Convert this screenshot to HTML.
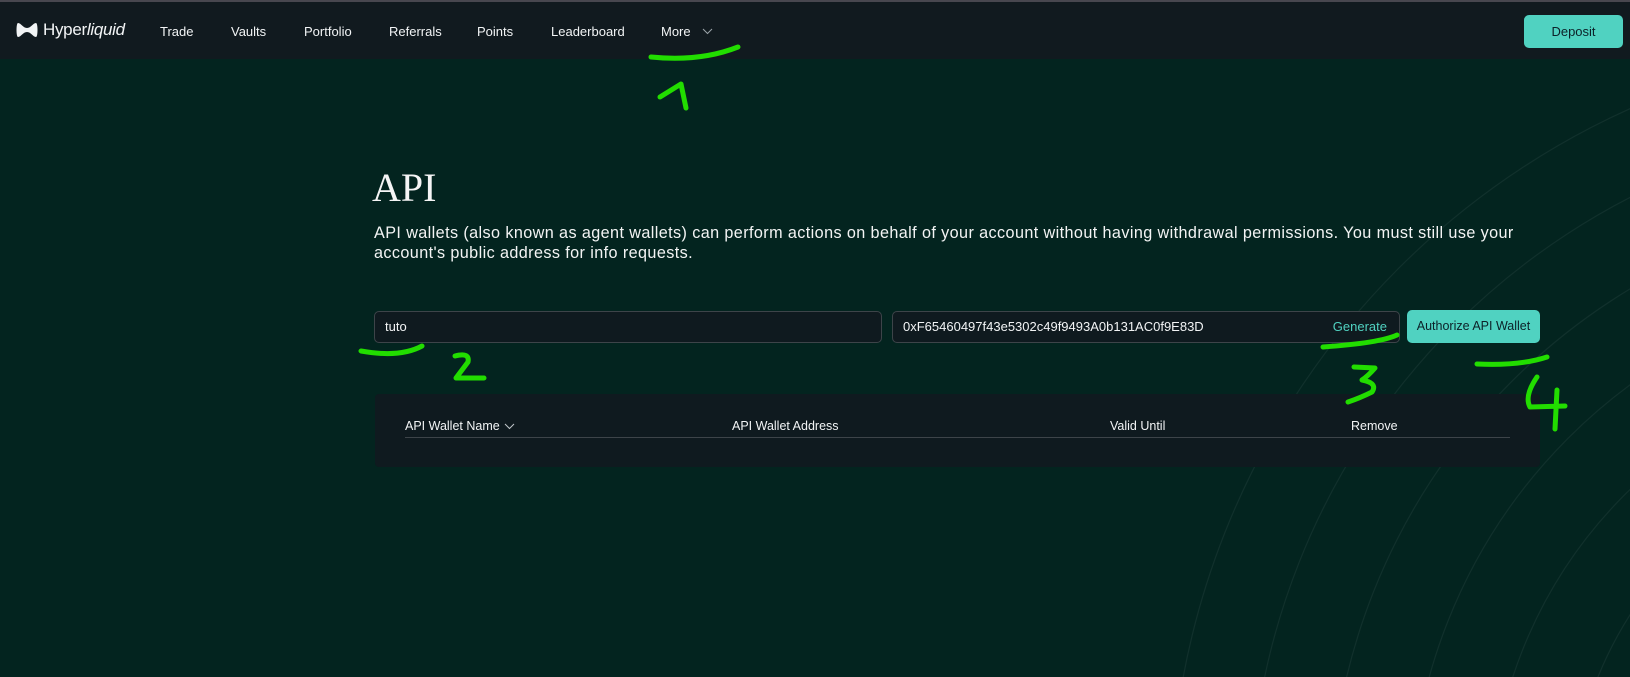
<!DOCTYPE html>
<html><head><meta charset="utf-8"><style>
*{box-sizing:border-box;margin:0;padding:0}
body{width:1630px;height:677px;overflow:hidden;background:#03241f;font-family:"Liberation Sans",sans-serif;color:#fff;position:relative}
.top{position:absolute;left:0;top:0;width:1630px;height:2px;background:#48474f}
nav{position:absolute;left:0;top:2px;width:1630px;height:57px;background:#111a1f}
nav .it{position:absolute;top:22px;font-size:13px;color:#f2f4f5}
.logo{position:absolute;left:43px;top:18px;font-size:17px;color:#f2f4f5;letter-spacing:-0.3px}
.dep{position:absolute;left:1524px;top:13px;width:99px;height:33px;background:#50d2c1;border-radius:5px;color:#0c2128;font-size:13px;text-align:center;line-height:33px}
h1{position:absolute;left:372px;top:164px;font-family:"Liberation Serif",serif;font-weight:400;font-size:40px;color:#f5f5f5}
.p{position:absolute;left:374px;top:223px;width:1170px;font-size:16.2px;line-height:20px;color:#f3f4f4;letter-spacing:0.4px}
.inp{position:absolute;top:311px;height:32px;background:#0f1a1f;border:1px solid #3d4449;border-radius:5px;font-size:13px;line-height:30px;padding-left:10px;color:#f2f4f5}
.btn{position:absolute;left:1407px;top:310px;width:133px;height:33px;background:#50d2c1;border-radius:5px;color:#0c2128;font-size:12.5px;text-align:center;line-height:33px}
.panel{position:absolute;left:375px;top:394px;width:1165px;height:73px;background:#0f1a1f;border-radius:4px}
.th{position:absolute;top:419px;font-size:12.5px;color:#f2f4f5}
.line{position:absolute;left:405px;top:437px;width:1105px;height:1px;background:#3d4449}
svg{position:absolute;left:0;top:0;overflow:hidden}
</style></head><body>
<svg width="1630" height="677">
<g fill="none" stroke="#ffffff" stroke-opacity="0.06" stroke-width="1.2">
<circle cx="1950" cy="820" r="300"/>
<circle cx="1950" cy="820" r="380"/>
<circle cx="1950" cy="820" r="460"/>
<circle cx="1950" cy="820" r="540"/>
<circle cx="1950" cy="820" r="620"/>
<circle cx="1950" cy="820" r="700"/>
<circle cx="1950" cy="820" r="780"/>
</g>
</svg>
<div class="top"></div>
<nav>
<svg width="30" height="20" style="left:15px;top:19px"><path d="M3 2 C1 2 1 16 3 16 C6 16 8 11 12 11 C16 11 18 16 21 16 C23 16 23 2 21 2 C18 2 16 7 12 7 C8 7 6 2 3 2Z" fill="#f2f4f5"/></svg>
<div class="logo">Hyper<i>liquid</i></div>
<div class="it" style="left:160px">Trade</div>
<div class="it" style="left:231px">Vaults</div>
<div class="it" style="left:304px">Portfolio</div>
<div class="it" style="left:389px">Referrals</div>
<div class="it" style="left:477px">Points</div>
<div class="it" style="left:551px">Leaderboard</div>
<div class="it" style="left:661px">More</div>
<svg width="14" height="10" style="left:701px;top:25px"><path d="M2 2 L6.5 6.5 L11 2" fill="none" stroke="#9aa3a8" stroke-width="1"/></svg>
<div class="dep">Deposit</div>
</nav>
<h1>API</h1>
<div class="p">API wallets (also known as agent wallets) can perform actions on behalf of your account without having withdrawal permissions. You must still use your account's public address for info requests.</div>
<div class="inp" style="left:374px;width:508px">tuto</div>
<div class="inp" style="left:892px;width:508px">0xF65460497f43e5302c49f9493A0b131AC0f9E83D<span style="position:absolute;right:12px;color:#50d2c1">Generate</span></div>
<div class="btn">Authorize API Wallet</div>
<div class="panel"></div>
<div class="th" style="left:405px">API Wallet Name</div>
<svg width="12" height="10" style="left:504px;top:422px"><path d="M1 2 L5.5 6.5 L10 2" fill="none" stroke="#c0c6ca" stroke-width="1"/></svg>
<div class="th" style="left:732px">API Wallet Address</div>
<div class="th" style="left:1110px">Valid Until</div>
<div class="th" style="left:1351px">Remove</div>
<div class="line"></div>
<svg width="1630" height="677">
<g fill="none" stroke="#22dd00" stroke-width="5" stroke-linecap="round" stroke-linejoin="round">
<path d="M651 57 Q700 62 738 47"/>
<path d="M660 97 L681 84 L686 108"/>
<path d="M361 351 Q400 358 422 346"/>
<path d="M455 356 Q470 352 468 362 Q462 370 456 378 L484 378"/>
<path d="M1323 347 Q1380 343 1397 335"/>
<path d="M1354 367 L1375 368 Q1368 376 1362 380 Q1378 383 1372 392 Q1360 398 1348 402"/>
<path d="M1477 364 Q1520 366 1547 357"/>
<path d="M1537 377 Q1524 396 1530 407 L1565 406 M1557 390 L1555 429"/>
</g>
</svg>
</body></html>
